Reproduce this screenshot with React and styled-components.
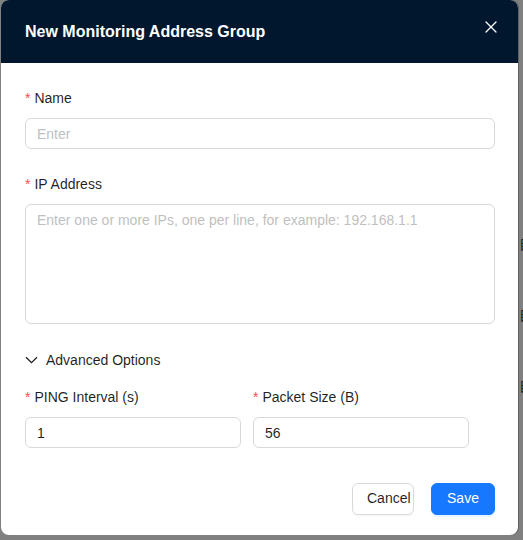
import React from "react";
import styled, { createGlobalStyle } from "styled-components";

const Global = createGlobalStyle`
  html, body { margin: 0; padding: 0; }
  body {
    background: #808080;
    font-family: "Liberation Sans", Arial, sans-serif;
    -webkit-font-smoothing: antialiased;
  }
  * { box-sizing: border-box; }
`;

const Page = styled.div`
  display: flex;
  width: 523px;
  height: 540px;
  padding-left: 1px;
  overflow: hidden;
`;

const Modal = styled.div`
  width: 517px;
  height: 535px;
  flex-shrink: 0;
  background: #fff;
  border-radius: 8px;
  overflow: hidden;
  display: flex;
  flex-direction: column;
  box-shadow: 1px 0 0 rgba(0, 0, 0, 0.25);
`;

const Strip = styled.div`
  flex: 1;
  overflow: hidden;
  display: flex;
  flex-direction: column;
  gap: 51px;
  padding-top: 233px;
  padding-left: 1px;
`;

const StripText = styled.div`
  font-family: "Noto Sans CJK SC", sans-serif;
  font-size: 14px;
  line-height: 20px;
  color: #1c1c1c;
  white-space: nowrap;
`;

const Header = styled.div`
  height: 63px;
  background: #00172d;
  display: flex;
  align-items: center;
  justify-content: space-between;
  padding: 0 24px;
  flex-shrink: 0;
`;

const Title = styled.div`
  color: #fff;
  font-weight: 700;
  font-size: 16px;
  line-height: 24px;
`;

const Close = styled.button`
  background: none;
  border: none;
  padding: 0;
  width: 14px;
  height: 14px;
  margin-top: -9px;
  margin-right: -4px;
  display: flex;
  align-items: center;
  justify-content: center;
  cursor: pointer;
`;

const Body = styled.div`
  flex: 1;
  display: flex;
  flex-direction: column;
  padding: 24px 23px 20px 24px;
`;

const Item = styled.div`
  display: flex;
  flex-direction: column;
  margin-bottom: ${(p) => p.$mb ?? 24}px;
`;

const Label = styled.label`
  font-size: 14px;
  line-height: 22px;
  color: rgba(0, 0, 0, 0.88);
  margin-bottom: 9px;
  display: flex;
  align-items: center;
`;

const Star = styled.span`
  color: #ff4d4f;
  font-size: 14px;
  margin-right: 4px;
  font-family: "Liberation Sans", sans-serif;
`;

const Input = styled.input`
  height: 31px;
  width: 100%;
  border: 1px solid #d9d9d9;
  border-radius: 6px;
  padding: 4px 11px;
  font-family: "Liberation Sans", Arial, sans-serif;
  font-size: 14px;
  color: rgba(0, 0, 0, 0.88);
  outline: none;
  background: #fff;
  &::placeholder { color: #bfbfbf; }
`;

const TextArea = styled.textarea`
  height: 120px;
  width: 100%;
  resize: none;
  border: 1px solid #d9d9d9;
  border-radius: 6px;
  padding: 4px 11px;
  font-family: "Liberation Sans", Arial, sans-serif;
  font-size: 14px;
  line-height: 22px;
  color: rgba(0, 0, 0, 0.88);
  outline: none;
  &::placeholder { color: #bfbfbf; }
`;

const Toggle = styled.div`
  display: flex;
  align-items: center;
  gap: 8px;
  font-size: 14px;
  line-height: 22px;
  color: rgba(0, 0, 0, 0.88);
  margin-top: 1px;
  margin-bottom: 15px;
  cursor: pointer;
`;

const Grid = styled.div`
  display: grid;
  grid-template-columns: 216px 216px;
  column-gap: 12px;
`;

const Footer = styled.div`
  margin-top: auto;
  display: flex;
  justify-content: flex-end;
  gap: 17px;
`;

const Button = styled.button`
  width: ${(p) => (p.$primary ? 64 : 62)}px;
  height: 32px;
  border-radius: 6px;
  font-family: "Liberation Sans", Arial, sans-serif;
  font-size: 14px;
  white-space: nowrap;
  cursor: pointer;
  border: 1px solid ${(p) => (p.$primary ? "#1677ff" : "#d9d9d9")};
  background: ${(p) => (p.$primary ? "#1677ff" : "#fff")};
  color: ${(p) => (p.$primary ? "#fff" : "rgba(0,0,0,0.88)")};
  padding: ${(p) => (p.$primary ? "0 0 3px 0" : "0 0 3px 14px")};
  text-align: ${(p) => (p.$primary ? "center" : "left")};
  box-shadow: ${(p) => (p.$primary ? "0 2px 0 rgba(5,145,255,0.1)" : "0 2px 0 rgba(0,0,0,0.02)")};
`;

export default function App() {
  return (
    <>
      <Global />
      <Page>
        <Modal>
          <Header>
            <Title>New Monitoring Address Group</Title>
            <Close aria-label="Close">
              <svg width="12" height="12" viewBox="0 0 12 12" fill="none">
                <path d="M1 1L11 11M11 1L1 11" stroke="#fff" strokeWidth="1.3" strokeLinecap="round" />
              </svg>
            </Close>
          </Header>
          <Body>
            <Item>
              <Label><Star>*</Star>Name</Label>
              <Input placeholder="Enter" />
            </Item>
            <Item>
              <Label><Star>*</Star>IP Address</Label>
              <TextArea placeholder="Enter one or more IPs, one per line, for example: 192.168.1.1" />
            </Item>
            <Toggle>
              <svg width="13" height="8" viewBox="0 0 13 8" fill="none">
                <path d="M1 1.2L6.5 6.7L12 1.2" stroke="rgba(0,0,0,0.88)" strokeWidth="1.3" />
              </svg>
              Advanced Options
            </Toggle>
            <Grid>
              <Item $mb={0}>
                <Label><Star>*</Star>PING Interval (s)</Label>
                <Input defaultValue="1" />
              </Item>
              <Item $mb={0}>
                <Label><Star>*</Star>Packet Size (B)</Label>
                <Input defaultValue="56" />
              </Item>
            </Grid>
            <Footer>
              <Button>Cancel</Button>
              <Button $primary>Save</Button>
            </Footer>
          </Body>
        </Modal>
        <Strip>
          <StripText>自动</StripText>
          <StripText>自动</StripText>
          <StripText>自动</StripText>
        </Strip>
      </Page>
    </>
  );
}
